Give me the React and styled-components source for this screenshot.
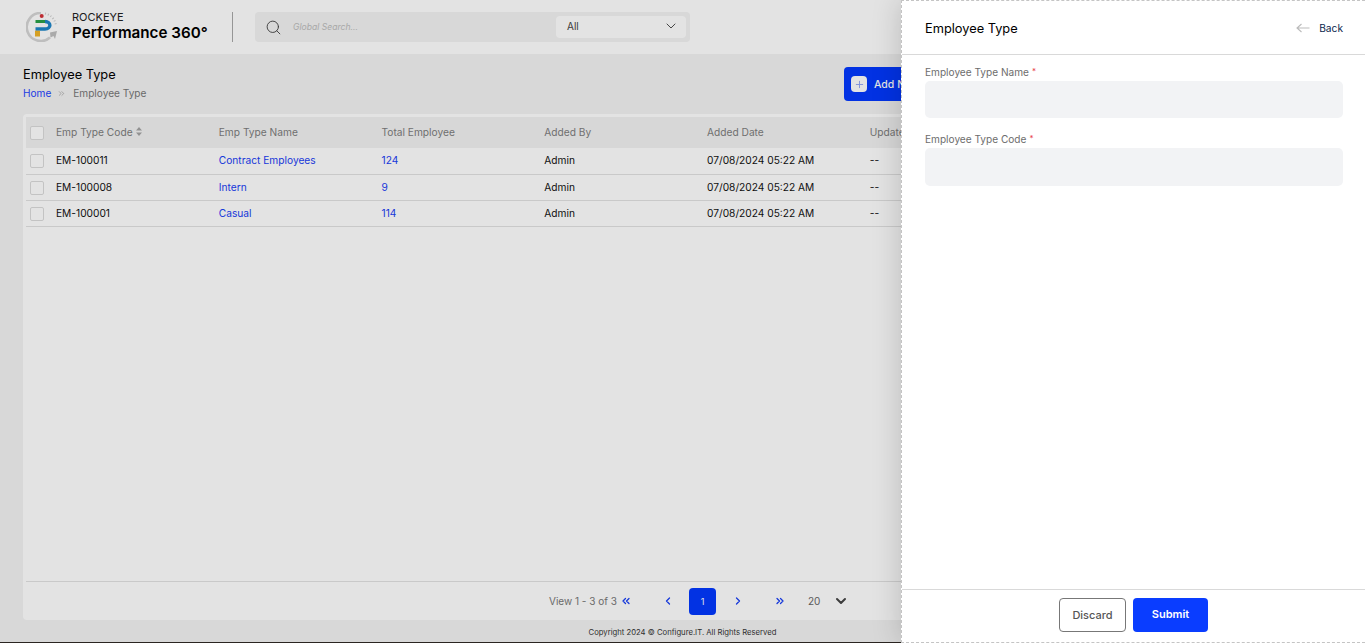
import styled, { createGlobalStyle } from "styled-components";
import { ChevronDown, ChevronLeft, ChevronRight, ChevronsLeft, ChevronsRight, Plus, Search } from "lucide-react";

const GlobalStyle = createGlobalStyle`
  * { box-sizing: border-box; }
  html, body { margin: 0; padding: 0; height: 100%; overflow: hidden; }
  body { font-family: Inter, "Liberation Sans", sans-serif; color: #000; background: #f3f3f3; }
`;

const Page = styled.div`
  position: relative;
  height: 643px;
  display: flex;
  flex-direction: column;
  background: #f3f3f3;
  overflow: hidden;
`;
const Header = styled.header`
  height: 54px;
  flex: none;
  background: #fff;
  display: flex;
  align-items: center;
  padding-left: 26px;
`;
const Brand = styled.div`
  display: flex;
  flex-direction: column;
  margin-left: 14px;
  width: 160px;
`;
const BrandTop = styled.span`
  font-size: 11px;
  line-height: 11px;
  color: #222;
`;
const BrandName = styled.span`
  font-size: 15.2px;
  line-height: 19px;
  font-weight: 600;
  white-space: nowrap;
`;
const Divider = styled.div`
  width: 1px;
  height: 30px;
  background: #a9a9a9;
`;
const SearchBox = styled.div`
  width: 435px;
  height: 30px;
  margin-left: 22px;
  padding: 0 4px 0 10px;
  border-radius: 4px;
  background: #f3f3f3;
  display: flex;
  align-items: center;
`;
const Placeholder = styled.span`
  flex: 1;
  margin-left: 11px;
  font-size: 8.6px;
  font-style: italic;
  color: #bdbdbd;
`;
const SelectBox = styled.div`
  width: 130px;
  height: 22px;
  padding: 0 7px 2px 11px;
  background: #fff;
  border-radius: 4px;
  display: flex;
  align-items: center;
  justify-content: space-between;
  font-size: 10px;
  line-height: 20px;
  color: #444;
`;
const Main = styled.main`
  flex: 1;
  min-height: 0;
  display: flex;
  flex-direction: column;
  padding: 0 23px;
`;
const TitleRow = styled.div`
  height: 60px;
  flex: none;
  display: flex;
  align-items: flex-start;
  justify-content: space-between;
  padding-top: 13px;
`;
const PageTitle = styled.h1`
  margin: 0;
  font-size: 12.8px;
  line-height: 15px;
  font-weight: 400;
`;
const Crumbs = styled.div`
  margin-top: 4px;
  font-size: 10.1px;
  line-height: 14px;
  color: #777;
  display: flex;
  align-items: center;
`;
const CrumbLink = styled.a`
  color: #1f45ff;
`;
const CrumbSep = styled.span`
  margin: 0 7px 0 6px;
  display: flex;
  color: #858585;
`;
const AddButton = styled.button`
  width: 110px;
  height: 34px;
  margin: 0 388px 0 0;
  border: 0;
  border-radius: 4px;
  background: #0339ff;
  color: #fff;
  font: 500 10.5px Inter, sans-serif;
  display: flex;
  align-items: center;
  padding: 0 7px;
  gap: 7px;
  white-space: nowrap;
`;
const PlusBox = styled.span`
  width: 16px;
  height: 16px;
  border-radius: 4px;
  background: #fff;
  color: #8ea2f5;
  display: flex;
  align-items: center;
  justify-content: center;
`;
const Card = styled.section`
  height: 506px;
  flex: none;
  background: #fff;
  border-radius: 4px;
  padding: 3px 3px 0;
  display: flex;
  flex-direction: column;
`;
const Table = styled.div`
  flex: 1;
`;
const Row = styled.div`
  display: grid;
  grid-template-columns: 30px repeat(7, 162.75px);
  align-items: center;
  height: ${(p) => p.$h}px;
  background: ${(p) => (p.$head ? "#f2f2f2" : "transparent")};
  color: ${(p) => (p.$head ? "#7d7d7d" : "#111")};
  border-bottom: ${(p) => (p.$head ? "0" : "1px solid #e2e2e2")};
  font-size: 10.2px;
  white-space: nowrap;
`;
const Cell = styled.span`
  color: ${(p) => (p.$link ? "#1a40f5" : "inherit")};
  margin-bottom: 2px;
`;
const CheckBox = styled.span`
  width: 14px;
  height: 14px;
  margin-left: 4px;
  background: #fff;
  border: 1px solid #dcdcdc;
  border-radius: 2px;
`;
const SortMark = styled.svg`
  margin-left: 3px;
  vertical-align: 0;
`;
const Pager = styled.div`
  height: 39px;
  flex: none;
  border-top: 1px solid #e2e2e2;
  display: flex;
  align-items: center;
  padding: 0 0 0 523px;
  font-size: 10px;
  color: #777;
`;
const ViewText = styled.span`
  width: 64px;
  white-space: nowrap;
`;
const PageBtn = styled.span`
  width: 27px;
  height: 27px;
  margin: 0 ${(p) => p.$mr || 4}px 0 ${(p) => p.$ml || 4}px;
  border-radius: 4px;
  display: flex;
  align-items: center;
  justify-content: center;
  color: ${(p) => (p.$active ? "#fff" : "#1a40f5")};
  background: ${(p) => (p.$active ? "#0339ff" : "transparent")};
  font-size: 9px;
`;
const PageSize = styled.span`
  margin-left: 11px;
  width: 25px;
  font-size: 10px;
  color: #666;
`;
const Copyright = styled.footer`
  flex: 1;
  display: flex;
  align-items: flex-end;
  justify-content: center;
  padding-bottom: 5px;
  font-size: 7.7px;
  line-height: 10px;
  color: #333;
`;
const Overlay = styled.div`
  position: absolute;
  inset: 0;
  background: rgba(0, 0, 0, 0.11);
  border-bottom: 1px solid #2b2521;
`;
const Panel = styled.aside`
  position: absolute;
  top: 0;
  right: 0;
  bottom: 0;
  width: 464px;
  background: #fff;
  border: 1px dashed #c4c4c4;
  border-right: 0;
  box-shadow: 0 0 28px rgba(0, 0, 0, 0.18);
  display: flex;
  flex-direction: column;
`;
const PanelHead = styled.div`
  height: 54px;
  flex: none;
  border-bottom: 1px solid #d9d9d9;
  display: flex;
  align-items: center;
  justify-content: space-between;
  padding: 1px 22px 0 23px;
`;
const PanelTitle = styled.h2`
  margin: 0;
  font-size: 12.8px;
  font-weight: 400;
`;
const BackLink = styled.a`
  display: flex;
  align-items: center;
  gap: 9px;
  font-size: 10.2px;
  color: #0b1f4d;
`;
const Form = styled.form`
  flex: 1;
  padding: 9px 22px 0 23px;
`;
const Field = styled.div`
  margin-bottom: 13px;
`;
const Label = styled.label`
  display: block;
  font-size: 10.1px;
  line-height: 14px;
  margin-bottom: 2px;
  color: #6d6d6d;
`;
const Req = styled.span`
  margin-left: 3px;
  font-size: 8px;
  vertical-align: 2px;
  color: #e8414a;
`;
const Input = styled.input`
  display: block;
  width: 100%;
  height: ${(p) => p.$h}px;
  border: 0;
  border-radius: 5px;
  background: #f2f3f5;
`;
const PanelFoot = styled.div`
  height: 53px;
  flex: none;
  border-top: 1px solid #d9d9d9;
  display: flex;
  justify-content: center;
  align-items: flex-start;
  gap: 7px;
  padding-top: 8px;
`;
const FootBtn = styled.button`
  width: ${(p) => (p.$primary ? 75 : 67)}px;
  height: 34px;
  padding: 0 0 ${(p) => (p.$primary ? 2 : 0)}px;
  border-radius: 4px;
  border: ${(p) => (p.$primary ? "0" : "1px solid #777")};
  background: ${(p) => (p.$primary ? "#0a3dff" : "#fff")};
  color: ${(p) => (p.$primary ? "#fff" : "#555")};
  font: ${(p) => (p.$primary ? 600 : 500)} 11px Inter, sans-serif;
`;

const Logo = () => (
  <svg width="32" height="30" viewBox="0 0 32 30" fill="none">
    <path d="M24 25.500A14 14 0 1 1 15 1" stroke="#d6d6d6" strokeWidth="2.6" />
    <path d="M19 1.500a14 14 0 0 1 11 12" stroke="#d0d0d0" strokeWidth="2" strokeDasharray="1 2" />
    <path d="M24 20.500l7-1.500-2 8-1.500-3-3 1.500z" fill="#bfbfbf" />
    <circle cx="15.700" cy="4" r="2" fill="#d5333a" />
    <path d="M9.500 9.500h11" stroke="#2ba14a" strokeWidth="3" />
    <path d="M19 9.500c6.500 0 6.500 7.500 0 7.500h-9.500" stroke="#1f86c9" strokeWidth="3.400" />
    <path d="M9 18.700h5v5.800H9z" fill="#f0b429" />
  </svg>
);

const rows = [
  { code: "EM-100011", name: "Contract Employees", total: 124 },
  { code: "EM-100008", name: "Intern", total: 9 },
  { code: "EM-100001", name: "Casual", total: 114 },
];

export default function App() {
  return (
    <Page>
      <GlobalStyle />
      <Header>
        <Logo />
        <Brand>
          <BrandTop>ROCKEYE</BrandTop>
          <BrandName>Performance 360°</BrandName>
        </Brand>
        <Divider />
        <SearchBox>
          <Search size={17} color="#444" strokeWidth={1.3} />
          <Placeholder>Global Search...</Placeholder>
          <SelectBox>
            All
            <ChevronDown size={16} color="#333" strokeWidth={1.3} />
          </SelectBox>
        </SearchBox>
      </Header>
      <Main>
        <TitleRow>
          <div>
            <PageTitle>Employee Type</PageTitle>
            <Crumbs>
              <CrumbLink>Home</CrumbLink>
              <CrumbSep>
                <ChevronsRight size={9} strokeWidth={1.4} />
              </CrumbSep>
              Employee Type
            </Crumbs>
          </div>
          <AddButton>
            <PlusBox>
              <Plus size={11} />
            </PlusBox>
            Add New
          </AddButton>
        </TitleRow>
        <Card>
          <Table>
            <Row $head $h={31}>
              <CheckBox />
              <Cell>
                Emp Type Code
                <SortMark width="6" height="9" viewBox="0 0 6 9" fill="#a5a5a5">
                  <path d="M3 0l3 3.500H0zM3 9L0 5.500h6z" />
                </SortMark>
              </Cell>
              <Cell>Emp Type Name</Cell>
              <Cell>Total Employee</Cell>
              <Cell>Added By</Cell>
              <Cell>Added Date</Cell>
              <Cell>Updated By</Cell>
              <Cell>Updated Date</Cell>
            </Row>
            {rows.map((r, i) => (
              <Row key={r.code} $h={i === 0 ? 27 : 26}>
                <CheckBox />
                <Cell>{r.code}</Cell>
                <Cell $link>{r.name}</Cell>
                <Cell $link>{r.total}</Cell>
                <Cell>Admin</Cell>
                <Cell>07/08/2024 05:22 AM</Cell>
                <Cell>--</Cell>
                <Cell>--</Cell>
              </Row>
            ))}
          </Table>
          <Pager>
            <ViewText>View 1 - 3 of 3</ViewText>
            <PageBtn $ml={-1} $mr={11}>
              <ChevronsLeft size={12} strokeWidth={2.6} />
            </PageBtn>
            <PageBtn>
              <ChevronLeft size={12} strokeWidth={2.6} />
            </PageBtn>
            <PageBtn $active>1</PageBtn>
            <PageBtn>
              <ChevronRight size={12} strokeWidth={2.6} />
            </PageBtn>
            <PageBtn $ml={11}>
              <ChevronsRight size={12} strokeWidth={2.6} />
            </PageBtn>
            <PageSize>20</PageSize>
            <ChevronDown size={16} color="#444" strokeWidth={3} />
          </Pager>
        </Card>
        <Copyright>Copyright 2024 © Configure.IT. All Rights Reserved</Copyright>
      </Main>
      <Overlay />
      <Panel>
        <PanelHead>
          <PanelTitle>Employee Type</PanelTitle>
          <BackLink>
            <svg width="14" height="10" viewBox="0 0 14 10" fill="none" stroke="#bbb" strokeWidth="1.100">
              <path d="M13.500 5H1M5.500 1L1 5l4.500 4" />
            </svg>
            Back
          </BackLink>
        </PanelHead>
        <Form>
          <Field>
            <Label>
              Employee Type Name<Req>*</Req>
            </Label>
            <Input $h={37} />
          </Field>
          <Field>
            <Label>
              Employee Type Code<Req>*</Req>
            </Label>
            <Input $h={38} />
          </Field>
        </Form>
        <PanelFoot>
          <FootBtn>Discard</FootBtn>
          <FootBtn $primary>Submit</FootBtn>
        </PanelFoot>
      </Panel>
    </Page>
  );
}
